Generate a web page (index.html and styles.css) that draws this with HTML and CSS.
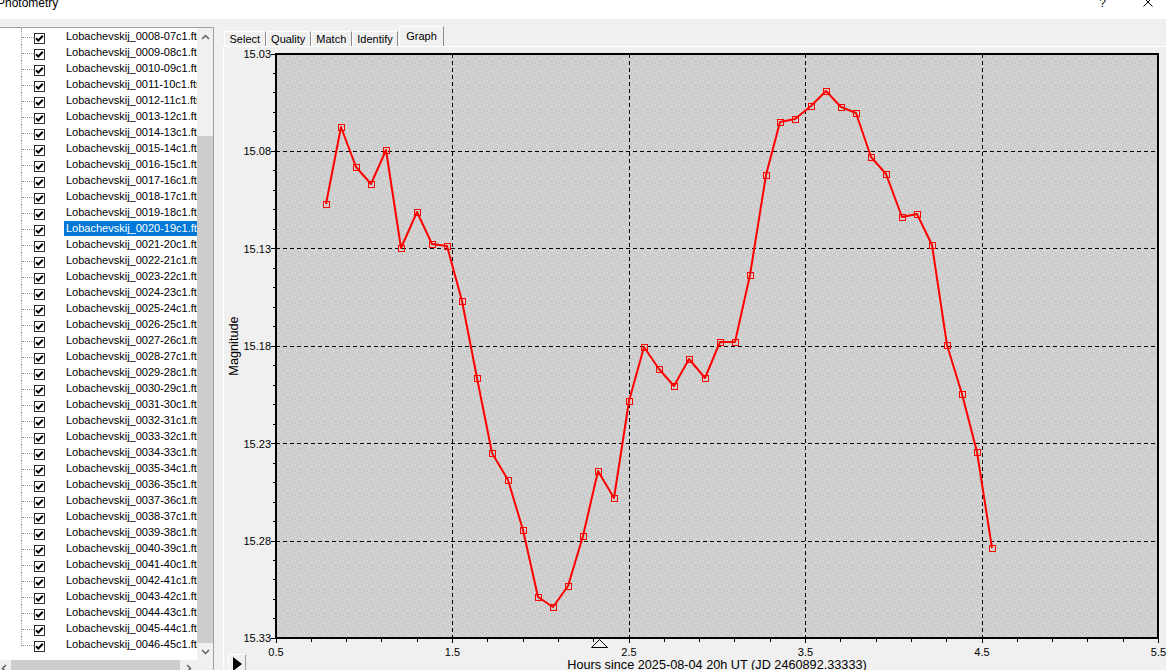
FILE: index.html
```html
<!DOCTYPE html>
<html lang="en">
<head>
<meta charset="UTF-8">
<title>Photometry</title>
<link rel="stylesheet" href="styles.css">
</head>
<body>
<div class="titlebar">
    <span class="title">Photometry</span>
    <span class="help">?</span>
    <svg class="close" width="10" height="10" viewBox="0 0 10 10"><path d="M0.5 0.5L9.5 9.5M9.5 0.5L0.5 9.5" stroke="#000" stroke-width="1"/></svg>
</div>

<div class="main">
    <div class="tree">
        <div class="tree-body">
            <div class="items" id="items"></div>
            <div class="vscroll">
                <div class="sb-btn"><svg width="9" height="6" viewBox="0 0 9 6"><path d="M1 5L4.5 1.5L8 5" fill="none" stroke="#606060" stroke-width="1.5"/></svg></div>
                <div class="track"><div class="thumb"></div></div>
                <div class="sb-btn"><svg width="9" height="6" viewBox="0 0 9 6"><path d="M1 1L4.5 4.5L8 1" fill="none" stroke="#606060" stroke-width="1.5"/></svg></div>
            </div>
        </div>
        <div class="hscroll">
            <div class="hs-btn hs-left"><svg width="6" height="9" viewBox="0 0 6 9"><path d="M5 1L1.5 4.5L5 8" fill="none" stroke="#606060" stroke-width="1.5"/></svg></div>
            <div class="hthumb"></div>
            <div class="hs-btn hs-right"><svg width="6" height="9" viewBox="0 0 6 9"><path d="M1 1L4.5 4.5L1 8" fill="none" stroke="#606060" stroke-width="1.5"/></svg></div>
            <div class="corner"></div>
        </div>
    </div>

    <div class="tabctl">
        <div class="tabs">
            <div class="tab">Select</div>
            <div class="tab">Quality</div>
            <div class="tab">Match</div>
            <div class="tab">Identify</div>
            <div class="tab active">Graph</div>
        </div>
        <div class="page">
            <svg class="graph" id="graph" width="942" height="623" viewBox="224 47 942 623">
                <defs>
                    <pattern id="speckle" width="12" height="12" patternUnits="userSpaceOnUse">
                        <rect width="12" height="12" fill="#cdcdcd"/>
                        <rect x="1" y="2" width="1" height="1" fill="#e6e6e6"/>
                        <rect x="5" y="0" width="1" height="1" fill="#e6e6e6"/>
                        <rect x="9" y="3" width="1" height="1" fill="#e6e6e6"/>
                        <rect x="3" y="6" width="1" height="1" fill="#e6e6e6"/>
                        <rect x="7" y="8" width="1" height="1" fill="#e6e6e6"/>
                        <rect x="11" y="10" width="1" height="1" fill="#e6e6e6"/>
                        <rect x="0" y="10" width="1" height="1" fill="#e6e6e6"/>
                        <rect x="6" y="4" width="1" height="1" fill="#e6e6e6"/>
                        <rect x="10" y="6" width="1" height="1" fill="#e6e6e6"/>
                        <rect x="2" y="11" width="1" height="1" fill="#e6e6e6"/>
                        <rect x="8" y="1" width="1" height="1" fill="#e6e6e6"/>
                        <rect x="4" y="9" width="1" height="1" fill="#e6e6e6"/>
                    </pattern>
                </defs>
                <rect x="276" y="54" width="882" height="584" fill="url(#speckle)"/>
                <g id="grid"></g>
                <rect x="276" y="54" width="882" height="584" fill="none" stroke="#000" stroke-width="2"/>
                <g id="ticks"></g>
                <g id="labels"></g>
                <text class="axis-title" transform="translate(238 346) rotate(-90)" text-anchor="middle">Magnitude</text>
                <text class="axis-title" x="717" y="669" text-anchor="middle">Hours since 2025-08-04 20h UT (JD 2460892.33333)</text>
                <polygon points="591.5,647.5 599.5,639.5 607.5,647.5" fill="#f0f0f0" stroke="#000" stroke-width="1"/>
                <g id="series"></g>
            </svg>
            <div class="play"><span class="play-icon"></span></div>
        </div>
    </div>
</div>

<script>
    // file list
    var items = document.getElementById("items");
    function pad(n, w) {
        var s = String(n);
        while (s.length < w) s = "0" + s;
        return s;
    }
    for (var i = 8; i <= 46; i++) {
        var row = document.createElement("div");
        row.className = "row" + (i == 20 ? " selected" : "");
        row.innerHTML = '<span class="branch"><span class="twig"></span></span>' +
            '<span class="check"><svg width="9" height="9" viewBox="0 0 9 9"><path d="M1 4.2L3.3 6.5L7.8 1.8" fill="none" stroke="#000" stroke-width="2"/></svg></span>' +
            '<span class="name">Lobachevskij_' + pad(i, 4) + '-' + pad(i - 1, 2) + 'c1.fts</span>';
        items.appendChild(row);
    }

    // light curve
    var hours = [0.783, 0.868, 0.954, 1.039, 1.124, 1.209, 1.299, 1.384, 1.469, 1.554,
                 1.639, 1.724, 1.815, 1.900, 1.985, 2.070, 2.155, 2.240, 2.325, 2.416,
                 2.501, 2.586, 2.671, 2.756, 2.841, 2.932, 3.017, 3.102, 3.187, 3.274,
                 3.357, 3.442, 3.533, 3.618, 3.703, 3.788, 3.873, 3.958, 4.049, 4.134,
                 4.219, 4.304, 4.389, 4.474, 4.559];
    var mags = [15.1071, 15.0677, 15.0882, 15.0969, 15.0795, 15.1298, 15.1113, 15.1276, 15.1286, 15.1570,
                15.1961, 15.2346, 15.2485, 15.2742, 15.3089, 15.3141, 15.3029, 15.2773, 15.2439, 15.2581,
                15.2079, 15.1804, 15.1915, 15.2006, 15.1865, 15.1961, 15.1781, 15.1781, 15.1435, 15.0923,
                15.0651, 15.0635, 15.0569, 15.0492, 15.0574, 15.0605, 15.0831, 15.0918, 15.1137, 15.1122,
                15.1281, 15.1795, 15.2047, 15.2345, 15.2838];

    var NS = "http://www.w3.org/2000/svg";
    var X0 = 276, XS = 176.5, Y0 = 54, YS = 1948;
    function sx(h) { return X0 + (h - 0.5) * XS; }
    function sy(m) { return Y0 + (m - 15.03) * YS; }
    function crisp(v) { return Math.floor(v + 0.01) + 0.5; }

    function add(parent, tag, attrs, text) {
        var e = document.createElementNS(NS, tag);
        for (var k in attrs) e.setAttribute(k, attrs[k]);
        if (text) e.textContent = text;
        document.getElementById(parent).appendChild(e);
        return e;
    }

    for (var k = 1; k <= 4; k++) {
        var gx = crisp(sx(0.5 + k));
        add("grid", "line", {x1: gx, y1: 54, x2: gx, y2: 638, "class": "gridline"});
    }
    for (var k = 1; k <= 5; k++) {
        var gy = crisp(sy(15.03 + 0.05 * k));
        add("grid", "line", {x1: 276, y1: gy, x2: 1158, y2: gy, "class": "gridline"});
    }

    for (var j = 0; j <= 30; j++) {
        var ty = crisp(Y0 + j * YS * 0.01);
        add("ticks", "line", {x1: j % 5 == 0 ? 271 : 273, y1: ty, x2: 276, y2: ty, "class": "tick"});
    }
    for (var j = 0; j <= 25; j++) {
        var tx = crisp(sx(0.5 + 0.2 * j));
        add("ticks", "line", {x1: tx, y1: 639, x2: tx, y2: j % 5 == 0 ? 643 : 642, "class": "tick"});
    }

    for (var k = 0; k <= 6; k++) {
        var m = 15.03 + 0.05 * k;
        add("labels", "text", {x: 271, y: sy(m) + 4, "text-anchor": "end"}, m.toFixed(2));
    }
    for (var k = 0; k <= 5; k++) {
        add("labels", "text", {x: sx(0.5 + k), y: 655.5, "text-anchor": "middle"}, (0.5 + k).toFixed(1));
    }

    var pts = [];
    for (var i = 0; i < hours.length; i++) {
        pts.push(Math.round(sx(hours[i])) + "," + Math.round(sy(mags[i])));
    }
    add("series", "polyline", {points: pts.join(" "), "class": "curve"});
    for (var i = 0; i < hours.length; i++) {
        var px = Math.round(sx(hours[i])), py = Math.round(sy(mags[i]));
        add("series", "rect", {x: px - 2.5, y: py - 2.5, width: 6, height: 6, "class": "marker"});
    }
</script>
</body>
</html>
```

FILE: styles.css
```css
body {
    margin: 0;
    width: 1166px;
    height: 670px;
    overflow: hidden;
    background-color: #f0f0f0;
    font-family: "Liberation Sans", Arial, sans-serif;
    font-size: 11px;
    color: #000;
}

.titlebar {
    height: 19px;
    background-color: #fff;
    display: flex;
    align-items: flex-start;
    overflow: hidden;
}

.title {
    font-size: 12px;
    line-height: 12px;
    margin: -3px 0 0 -3px;
}

.help {
    font-size: 12px;
    line-height: 12px;
    margin: -3px 0 0 auto;
}

.close {
    flex: none;
    margin: -3px 13px 0 37px;
}

.main {
    display: flex;
    align-items: flex-start;
    height: 651px;
}

/* file tree */
.tree {
    flex: none;
    width: 216px;
    height: 649px;
    margin: 8px 0 0 -4px;
    border: 1px solid #a0a0a0;
    background-color: #fff;
    display: flex;
    flex-direction: column;
}

.tree-body {
    display: flex;
    height: 632px;
}

.items {
    width: 200px;
    overflow: hidden;
}

.row {
    display: flex;
    height: 16px;
}

.branch {
    flex: none;
    width: 13px;
    height: 16px;
    margin-left: 24px;
    box-sizing: border-box;
    border-left: 1px dotted #a0a0a0;
}

.row:last-child .branch {
    height: 10px;
}

.twig {
    display: block;
    height: 10px;
    box-sizing: border-box;
    border-bottom: 1px dotted #a0a0a0;
}

.check {
    flex: none;
    width: 11px;
    height: 11px;
    margin-top: 5px;
    box-sizing: border-box;
    border: 1px solid #333;
    background-color: #fff;
    display: flex;
    align-items: center;
    justify-content: center;
}

.name {
    height: 15px;
    margin: 1px 0 0 19px;
    padding: 0 2px;
    line-height: 14px;
    white-space: nowrap;
}

.row.selected .name {
    background-color: #0078d7;
    color: #fff;
}

.vscroll {
    width: 16px;
    display: flex;
    flex-direction: column;
    background-color: #f0f0f0;
}

.sb-btn {
    height: 17px;
    display: flex;
    align-items: center;
    justify-content: center;
}

.track {
    flex: 1;
    padding-top: 91px;
}

.thumb {
    height: 507px;
    background-color: #cdcdcd;
}

.hscroll {
    height: 17px;
    display: flex;
    background-color: #f0f0f0;
}

.hs-btn {
    display: flex;
    align-items: center;
    justify-content: center;
}

.hs-left {
    width: 14px;
}

.hthumb {
    width: 169px;
    background-color: #cdcdcd;
}

.hs-right {
    width: 17px;
}

.corner {
    width: 16px;
}

/* tabs */
.tabctl {
    flex: 1;
    margin: 7px 0 0 9px;
    display: flex;
    flex-direction: column;
}

.tabs {
    display: flex;
    align-items: flex-end;
    height: 20px;
    padding-left: 1px;
}

.tab {
    height: 15px;
    box-sizing: border-box;
    padding: 0 4.5px;
    line-height: 14px;
    border-top: 1px solid #fff;
    border-left: 1px solid #fff;
    border-right: 1px solid #8c8c8c;
    white-space: nowrap;
}

.tab.active {
    height: 20px;
    padding: 0 6px;
    margin-left: 1px;
    line-height: 18px;
}

.page {
    position: relative;
    height: 623px;
    border-top: 1px solid #fff;
    border-left: 1px solid #fff;
}

.graph {
    display: block;
}

.graph text {
    font-family: "Liberation Sans", Arial, sans-serif;
    font-size: 11px;
    fill: #000;
}

.graph .axis-title {
    font-size: 12.7px;
}

.gridline {
    stroke: #000;
    stroke-width: 1;
    stroke-dasharray: 4 3;
}

.tick {
    stroke: #000;
    stroke-width: 1;
}

.curve {
    fill: none;
    stroke: #ff0000;
    stroke-width: 2;
    stroke-linejoin: round;
}

.marker {
    fill: none;
    stroke: #ff0000;
    stroke-width: 1;
}

.play {
    position: absolute;
    left: 4px;
    top: 607px;
    width: 18px;
    height: 18px;
    box-sizing: border-box;
    padding: 2px 0 0 4px;
    border: 1px solid;
    border-color: #fff #a0a0a0 #a0a0a0 #fff;
    background-color: #f0f0f0;
}

.play-icon {
    display: block;
    width: 0;
    height: 0;
    border-left: 9px solid #000;
    border-top: 7px solid transparent;
    border-bottom: 7px solid transparent;
}
```
